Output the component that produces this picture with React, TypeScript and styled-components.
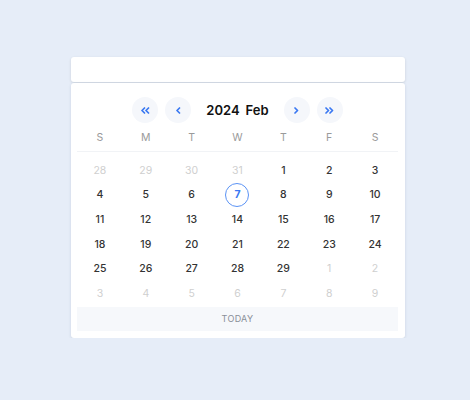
import React from "react";
import styled, { createGlobalStyle } from "styled-components";

const Global = createGlobalStyle`
  html, body { margin: 0; padding: 0; background: #e6edf8; }
  body { font-family: Inter, "Noto Sans", sans-serif; }
  #root { padding-top: 57px; }
`;

const Wrapper = styled.div`
  width: 334px;
  margin-left: 71px;
`;

const InputBox = styled.div`
  height: 25px;
  background: #fff;
  border-radius: 3px;
  box-shadow: 0 1px 3px rgba(0, 0, 0, 0.12);
`;

const Panel = styled.div`
  margin-top: 1px;
  background: #fff;
  border-radius: 3px;
  box-shadow: 0 1px 3px rgba(40, 60, 100, 0.15);
  padding: 14px 7px 7px 6px;
`;

const Header = styled.div`
  display: flex;
  align-items: center;
  justify-content: center;
  height: 26px;
`;

const NavButton = styled.button<{ $gapAfter?: number }>`
  width: 26px;
  height: 26px;
  border-radius: 50%;
  border: none;
  background: #f5f7fb;
  display: flex;
  align-items: center;
  justify-content: center;
  padding: 0;
  margin-right: ${(p) => p.$gapAfter ?? 0}px;
  color: #3a78f2;
`;

const Title = styled.div`
  display: flex;
  gap: 6px;
  font-size: 13px;
  font-weight: 600;
  color: #111;
  margin: 0 15px;
`;

const WeekRow = styled.div`
  display: grid;
  grid-template-columns: repeat(7, 1fr);
  height: 28px;
  align-items: center;
  border-bottom: 1px solid #f1f3f6;
`;

const WeekDay = styled.div`
  text-align: center;
  font-size: 10.5px;
  color: #9a9a9a;
`;

const DayGrid = styled.div`
  display: grid;
  grid-template-columns: repeat(7, 1fr);
  grid-auto-rows: 24.6px;
  margin-top: 6px;
`;

const Day = styled.div<{ $muted?: boolean; $selected?: boolean }>`
  display: flex;
  align-items: center;
  justify-content: center;
  font-size: 10.5px;
  color: ${(p) => (p.$muted ? "#cfcfcf" : p.$selected ? "#3a78f2" : "#333")};
  font-weight: ${(p) => (p.$muted ? 400 : p.$selected ? 700 : 500)};
`;

const Ring = styled.span`
  width: 22px;
  height: 22px;
  border-radius: 50%;
  border: 1px solid #5b93f5;
  display: flex;
  align-items: center;
  justify-content: center;
`;

const TodayBar = styled.div`
  height: 24px;
  margin-top: 1px;
  background: #f6f8fb;
  display: flex;
  align-items: center;
  justify-content: center;
  font-size: 9px;
  color: #8a8f98;
  letter-spacing: 0.3px;
`;

const Chevron = ({ dir, double }: { dir: "left" | "right"; double?: boolean }) => {
  const pts = (x: number) =>
    dir === "left" ? `${x + 2.5},1 ${x},3.5 ${x + 2.5},6` : `${x},1 ${x + 2.5},3.5 ${x},6`;
  return (
    <svg width={double ? 9 : 5} height="7" viewBox={double ? "0 0 9 7" : "0 0 5 7"}>
      <polyline points={pts(1)} fill="none" stroke="currentColor" strokeWidth="1.7" strokeLinecap="round" strokeLinejoin="round" />
      {double && (
        <polyline points={pts(5)} fill="none" stroke="currentColor" strokeWidth="1.7" strokeLinecap="round" strokeLinejoin="round" />
      )}
    </svg>
  );
};

type Cell = { d: number; muted?: boolean };

const cells: Cell[] = [
  ...[28, 29, 30, 31].map((d) => ({ d, muted: true })),
  ...Array.from({ length: 29 }, (_, i) => ({ d: i + 1 })),
  ...Array.from({ length: 9 }, (_, i) => ({ d: i + 1, muted: true })),
];

export default function App() {
  return (
    <>
      <Global />
      <Wrapper>
        <InputBox />
        <Panel>
          <Header>
            <NavButton $gapAfter={7}>
              <Chevron dir="left" double />
            </NavButton>
            <NavButton>
              <Chevron dir="left" />
            </NavButton>
            <Title>
              <span>2024</span>
              <span>Feb</span>
            </Title>
            <NavButton $gapAfter={7}>
              <Chevron dir="right" />
            </NavButton>
            <NavButton>
              <Chevron dir="right" double />
            </NavButton>
          </Header>
          <WeekRow>
            {["S", "M", "T", "W", "T", "F", "S"].map((w, i) => (
              <WeekDay key={i}>{w}</WeekDay>
            ))}
          </WeekRow>
          <DayGrid>
            {cells.map((c, i) => {
              const selected = !c.muted && c.d === 7;
              return (
                <Day key={i} $muted={c.muted} $selected={selected}>
                  {selected ? <Ring>{c.d}</Ring> : c.d}
                </Day>
              );
            })}
          </DayGrid>
          <TodayBar>TODAY</TodayBar>
        </Panel>
      </Wrapper>
    </>
  );
}
